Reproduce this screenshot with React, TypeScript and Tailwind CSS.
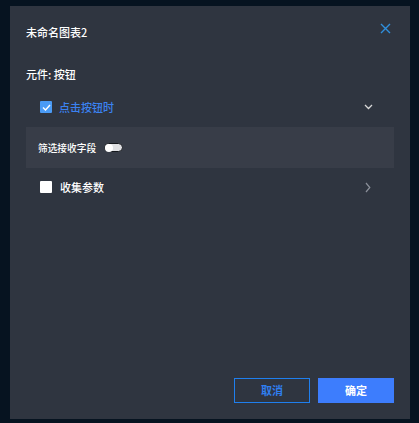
import React from "react";

const font = { fontFamily: '"Noto Sans CJK SC", "Noto Sans", sans-serif' };

function ChevronDown() {
  return (
    <svg width="9" height="6" viewBox="0 0 9 6" fill="none">
      <path d="M1 1 L4.5 4.5 L8 1" stroke="#d8d8d8" strokeWidth="1.3" />
    </svg>
  );
}

function ChevronRight() {
  return (
    <svg width="6" height="11" viewBox="0 0 6 11" fill="none">
      <path d="M1 1 L4.8 5.5 L1 10" stroke="#8a8f99" strokeWidth="1.2" />
    </svg>
  );
}

export default function App() {
  return (
    <div className="w-[419px] h-[423px] bg-[#061320] pt-[6px] pl-[10px]" style={font}>
      <div className="w-[400px] h-[413px] bg-[#2f3540] flex flex-col px-4 pt-4 pb-4">
        <div className="flex items-start justify-between h-5">
          <div className="text-[11px] leading-5 text-white font-medium">未命名图表2</div>
          <svg className="mt-[1px] mr-[3px]" width="11" height="11" viewBox="0 0 11 11" fill="none">
            <path d="M1 1 L10 10 M10 1 L1 10" stroke="#2f8fdc" strokeWidth="1.4" />
          </svg>
        </div>
        <div className="mt-[22px] h-5 text-[11px] leading-5 text-white font-medium">元件: 按钮</div>
        <div className="mt-[13px] h-5 flex items-center pl-[14px] pr-[20px]">
          <div className="w-3 h-3 rounded-[1px] bg-[#4b9bf5] flex items-center justify-center">
            <svg width="9" height="7" viewBox="0 0 9 7" fill="none">
              <path d="M1 3.5 L3.5 6 L8 1" stroke="white" strokeWidth="1.4" />
            </svg>
          </div>
          <div className="ml-[7px] text-[11px] leading-5 text-[#3b82f0] font-medium">点击按钮时</div>
          <div className="ml-auto w-3 flex justify-center">
            <ChevronDown />
          </div>
        </div>
        <div className="mt-[10px] h-[41px] bg-[#383d48] flex items-center pl-3">
          <div className="text-[9.7px] leading-4 text-white font-medium">筛选接收字段</div>
          <div className="ml-[8px] w-[19px] h-[9px] rounded-full bg-[#dfe0e3] border border-[#15181d] flex items-center">
            <div className="w-[8px] h-[8px] rounded-full bg-white" />
          </div>
        </div>
        <div className="mt-[9px] h-5 flex items-center pl-[14px] pr-[20px]">
          <div className="w-3 h-3 rounded-[1px] bg-white" />
          <div className="ml-[8px] text-[11px] leading-5 text-white font-medium">收集参数</div>
          <div className="ml-auto w-3 flex justify-center">
            <ChevronRight />
          </div>
        </div>
        <div className="mt-auto flex justify-end gap-2">
          <button className="w-[76px] h-[25px] border border-[#1f7fee] text-[#2f7ff0] text-[11px] font-bold flex items-center justify-center">
            取消
          </button>
          <button className="w-[76px] h-[25px] bg-[#3d7dfd] text-white text-[11px] font-bold flex items-center justify-center">
            确定
          </button>
        </div>
      </div>
    </div>
  );
}
